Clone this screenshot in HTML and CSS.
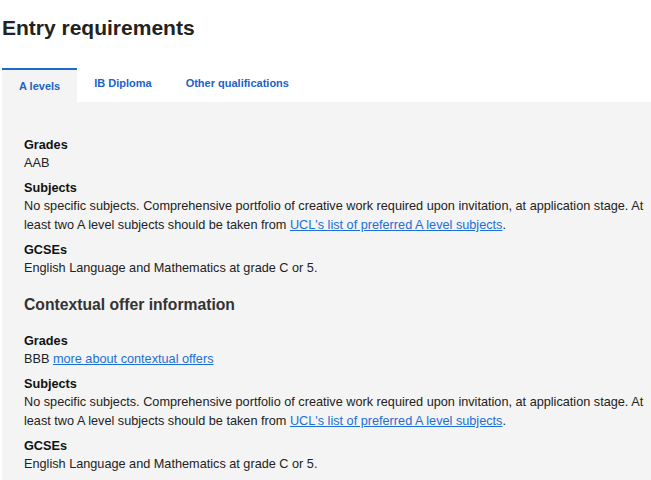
FILE: index.html
```html
<!DOCTYPE html>
<html lang="en">
<head>
<meta charset="utf-8">
<title>Entry requirements</title>
<link rel="stylesheet" href="styles.css">
</head>
<body>
<div class="page">
  <h2 class="title">Entry requirements</h2>
  <ul class="tabs">
    <li class="tab active">A levels</li>
    <li class="tab">IB Diploma</li>
    <li class="tab">Other qualifications</li>
  </ul>
  <div class="panel">
    <dl class="reqs">
      <dt>Grades</dt>
      <dd>AAB</dd>
      <dt>Subjects</dt>
      <dd>No specific subjects. Comprehensive portfolio of creative work required upon invitation, at application stage. At least two A level subjects should be taken from <a href="#">UCL's list of preferred A level subjects</a>.</dd>
      <dt>GCSEs</dt>
      <dd>English Language and Mathematics at grade C or 5.</dd>
    </dl>
    <h3 class="subhead">Contextual offer information</h3>
    <dl class="reqs">
      <dt>Grades</dt>
      <dd>BBB <a href="#">more about contextual offers</a></dd>
      <dt>Subjects</dt>
      <dd>No specific subjects. Comprehensive portfolio of creative work required upon invitation, at application stage. At least two A level subjects should be taken from <a href="#">UCL's list of preferred A level subjects</a>.</dd>
      <dt>GCSEs</dt>
      <dd>English Language and Mathematics at grade C or 5.</dd>
    </dl>
  </div>
</div>
</body>
</html>
```

FILE: styles.css
```css
html, body {
  margin: 0;
  padding: 0;
  background: #ffffff;
}
body {
  font-family: "Liberation Sans", Arial, sans-serif;
  color: #222222;
}
.page {
  padding-left: 2px;
}
.title {
  margin: 0;
  padding-top: 15px;
  font-size: 21px;
  line-height: 26px;
  font-weight: bold;
  color: #222222;
}
.tabs {
  list-style: none;
  margin: 27px 0 0 0;
  padding: 0;
  display: flex;
}
.tab {
  font-size: 11px;
  font-weight: bold;
  color: #1b63c4;
  padding: 7px 17px 0 17px;
  height: 25px;
  border-top: 2px solid transparent;
}
.tab.active {
  background: #f4f4f4;
  border-top-color: #1a6bd0;
  padding-top: 10px;
  height: 22px;
}
.panel {
  background: #f4f4f4;
  padding: 34px 6px 20px 22px;
}
.reqs {
  margin: 0;
}
.reqs dt {
  font-size: 12.7px;
  font-weight: bold;
  line-height: 18px;
  color: #111111;
  margin-top: 6px;
}
.reqs dt:first-child {
  margin-top: 0;
}
.reqs dd {
  margin: 0;
  font-size: 12.7px;
  line-height: 19px;
  color: #222222;
}
.reqs a {
  color: #1b6fd6;
  text-decoration: underline;
}
.subhead {
  margin: 17px 0 17px 0;
  font-size: 15.7px;
  line-height: 20px;
  font-weight: bold;
  color: #333333;
}
```
